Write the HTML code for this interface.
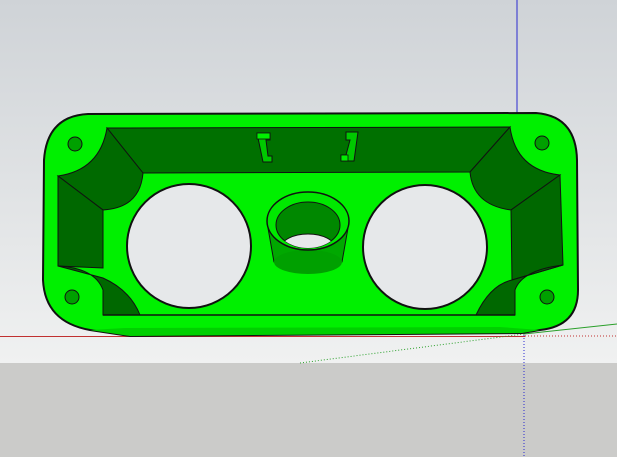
<!DOCTYPE html>
<html><head><style>html,body{margin:0;padding:0;overflow:hidden}</style></head><body>
<svg width="617" height="457" viewBox="0 0 617 457" xmlns="http://www.w3.org/2000/svg">
<defs>
<linearGradient id="sky" x1="0" y1="0" x2="0" y2="1">
<stop offset="0" stop-color="#cfd3d7"/><stop offset="1" stop-color="#f0f1f1"/>
</linearGradient>
<clipPath id="inner"><ellipse cx="308" cy="225" rx="32" ry="23"/></clipPath>
</defs>
<rect width="617" height="363" fill="url(#sky)"/>
<rect y="363" width="617" height="94" fill="#cbcbc9"/>
<line x1="517" y1="0" x2="517" y2="113" stroke="#2a2ad0" stroke-width="1"/>
<line x1="0" y1="336.5" x2="525" y2="336.5" stroke="#c03030" stroke-width="1"/>
<line x1="525" y1="336" x2="617" y2="336" stroke="#c03030" stroke-width="1" stroke-dasharray="1,2"/>
<line x1="524" y1="332" x2="524" y2="457" stroke="#2a2ad0" stroke-width="1" stroke-dasharray="1,2"/>
<line x1="524" y1="334" x2="617" y2="324" stroke="#2aa02a" stroke-width="1"/>
<line x1="300" y1="363" x2="524" y2="334" stroke="#2aa02a" stroke-width="1" stroke-dasharray="1,2"/>
<!-- plate -->
<path d="M88,114 L536,113 Q576,116 577,160 L578,290 Q578,326 540,330 L522,333 L130,336 L90,330 Q45,322 43,280 L44,160 Q47,116 88,114 Z" fill="#00f000" stroke="#111" stroke-width="2"/>
<path d="M90,330 L130,336 L522,333 L540,330 L500,327 L125,328 Z" fill="#00d000"/>
<!-- pocket back wall -->
<path d="M107,128 L510,127 L470,172 L143,173 Z" fill="#007000" stroke="#111" stroke-width="1"/>
<!-- left corner walls -->
<path d="M107,128 Q100,170 58,176 L103,210 Q140,208 143,173 Z" fill="#006a00" stroke="#111" stroke-width="1"/>
<path d="M58,176 L103,210 L103,268 L58,266 Z" fill="#006800" stroke="#111" stroke-width="1"/>
<path d="M58,266 Q95,268 103,290 L103,315 L140,315 Q130,290 103,278 Z" fill="#006800" stroke="#111" stroke-width="1"/>
<!-- right corner walls -->
<path d="M510,127 Q516,170 560,175 L511,210 Q473,205 470,172 Z" fill="#006a00" stroke="#111" stroke-width="1"/>
<path d="M560,175 L511,210 L512,280 L563,265 Z" fill="#006800" stroke="#111" stroke-width="1"/>
<path d="M563,265 Q522,270 515,290 L515,315 L476,315 Q490,285 512,280 Z" fill="#006800" stroke="#111" stroke-width="1"/>
<line x1="103" y1="315" x2="515" y2="315" stroke="#111" stroke-width="1.5"/>
<!-- clips -->
<path d="M257,133 L270,133 L270,140 L266,140 L268,156 L272,156 L272,162 L263,162 Z" fill="#00c800" stroke="#111" stroke-width="1"/>
<rect x="257" y="133" width="13" height="6" fill="#00f000" stroke="#111" stroke-width="0.8"/>
<path d="M346,132 L358,132 L354,161 L341,161 L341,155 L346,155 L350,140 L346,140 Z" fill="#00c800" stroke="#111" stroke-width="1"/>
<rect x="341" y="155" width="7" height="6" fill="#00f000" stroke="#111" stroke-width="0.8"/>
<!-- holes -->
<circle cx="189" cy="246" r="62" fill="#e6e8ea" stroke="#111" stroke-width="2"/>
<circle cx="425" cy="247" r="62" fill="#e6e8ea" stroke="#111" stroke-width="2"/>
<!-- boss -->
<path d="M268,228 L274,262 Q308,284 342,262 L348,228 Z" fill="#00a800" stroke="#111" stroke-width="1"/>
<ellipse cx="308" cy="262" rx="34" ry="12" fill="#00a000" stroke="none"/>
<ellipse cx="308" cy="221" rx="41" ry="29" fill="#00e800" stroke="#111" stroke-width="1.5"/>
<ellipse cx="308" cy="225" rx="32" ry="23" fill="#008800" stroke="#111" stroke-width="1"/>
<ellipse cx="308" cy="248" rx="27" ry="14" fill="#e6e8ea" stroke="#111" stroke-width="1" clip-path="url(#inner)"/>
<!-- screw holes -->
<circle cx="75" cy="144" r="7" fill="#00a000" stroke="#111"/>
<circle cx="542" cy="143" r="7" fill="#00a000" stroke="#111"/>
<circle cx="72" cy="297" r="7" fill="#00a000" stroke="#111"/>
<circle cx="547" cy="297" r="7" fill="#00a000" stroke="#111"/>
</svg>
</body></html>
